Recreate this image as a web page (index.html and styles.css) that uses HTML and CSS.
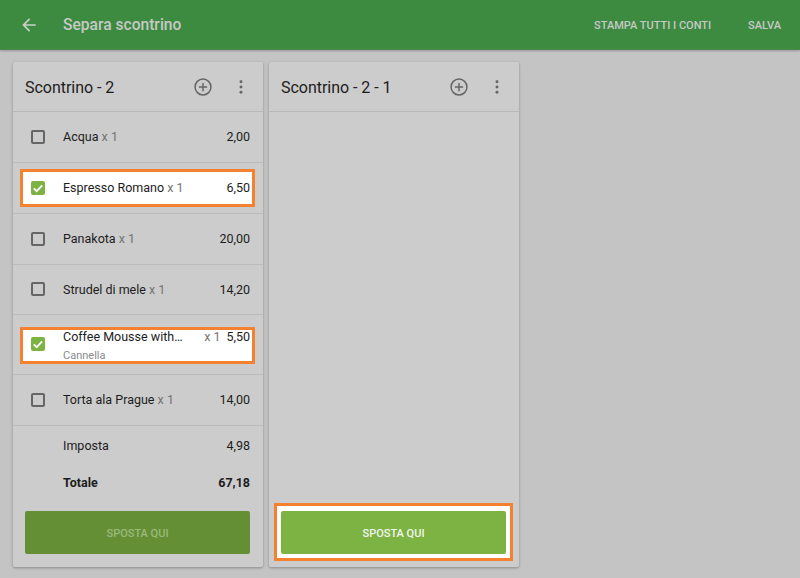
FILE: index.html
```html
<!DOCTYPE html>
<html lang="it">
<head>
<meta charset="utf-8">
<title>Separa scontrino</title>
<link rel="stylesheet" href="styles.css">
</head>
<body>
<header class="toolbar">
  <svg class="back" viewBox="0 0 24 24" width="20" height="20"><path d="M20 11H7.83l5.59-5.59L12 4l-8 8 8 8 1.41-1.41L7.83 13H20v-2z"/></svg>
  <h1 class="page-title">Separa scontrino</h1>
  <span class="action action-print">STAMPA TUTTI I CONTI</span>
  <span class="action">SALVA</span>
</header>
<main class="board">
  <section class="card">
    <div class="card-head">
      <h2 class="card-title">Scontrino - 2</h2>
      <svg class="icon-add" viewBox="0 0 24 24" width="18" height="18"><circle cx="12" cy="12" r="10.6"/><path d="M12 6.5v11M6.5 12h11"/></svg>
      <svg class="icon-more" viewBox="0 0 4 16" width="4" height="14"><circle cx="2" cy="2" r="1.7"/><circle cx="2" cy="8" r="1.7"/><circle cx="2" cy="14" r="1.7"/></svg>
    </div>
    <div class="row"><div class="item"><span class="check"></span><span class="name">Acqua <span class="qty">x 1</span></span><span class="price">2,00</span></div></div>
    <div class="row"><div class="item selected"><span class="check checked"><svg viewBox="0 0 14 14" width="14" height="14"><path d="M2.8 7.3l2.9 2.9 5.5-5.8"/></svg></span><span class="name">Espresso Romano <span class="qty">x 1</span></span><span class="price">6,50</span></div></div>
    <div class="row"><div class="item"><span class="check"></span><span class="name">Panakota <span class="qty">x 1</span></span><span class="price">20,00</span></div></div>
    <div class="row"><div class="item"><span class="check"></span><span class="name">Strudel di mele <span class="qty">x 1</span></span><span class="price">14,20</span></div></div>
    <div class="row row-tall"><div class="item selected"><span class="check checked check-raised"><svg viewBox="0 0 14 14" width="14" height="14"><path d="M2.8 7.3l2.9 2.9 5.5-5.8"/></svg></span><span class="name-stack"><span class="name-line"><span>Coffee Mousse with…</span><span class="qty">x 1</span></span><span class="note">Cannella</span></span><span class="price price-top">5,50</span></div></div>
    <div class="row"><div class="item"><span class="check"></span><span class="name">Torta ala Prague <span class="qty">x 1</span></span><span class="price">14,00</span></div></div>
    <div class="totals">
      <div class="total-line"><span>Imposta</span><span>4,98</span></div>
      <div class="total-line total-strong"><span>Totale</span><span>67,18</span></div>
    </div>
    <div class="foot"><button class="move move-off" type="button">SPOSTA QUI</button></div>
  </section>
  <section class="card">
    <div class="card-head">
      <h2 class="card-title">Scontrino - 2 - 1</h2>
      <svg class="icon-add" viewBox="0 0 24 24" width="18" height="18"><circle cx="12" cy="12" r="10.6"/><path d="M12 6.5v11M6.5 12h11"/></svg>
      <svg class="icon-more" viewBox="0 0 4 16" width="4" height="14"><circle cx="2" cy="2" r="1.7"/><circle cx="2" cy="8" r="1.7"/><circle cx="2" cy="14" r="1.7"/></svg>
    </div>
    <div class="spacer"></div>
    <div class="foot foot-marked"><div class="mark"><button class="move" type="button">SPOSTA QUI</button></div></div>
  </section>
</main>
</body>
</html>
```

FILE: styles.css
```css
* { box-sizing: border-box; }
html, body { height: 100%; }
body {
  margin: 0;
  height: 578px;
  overflow: hidden;
  background: #c4c4c4;
  font-family: Roboto, "Liberation Sans", sans-serif;
  color: #1c1c1c;
  display: flex;
  flex-direction: column;
}
.toolbar {
  flex: none;
  height: 50px;
  display: flex;
  align-items: center;
  background: #3d8b40;
  border-bottom: 1px solid #4c8a4e;
  box-shadow: 0 1px 2px rgba(70, 50, 70, .35);
  padding: 0 19px 0 19px;
  color: #c6c9c6;
}
.back { fill: #c6d3c6; flex: none; }
.page-title {
  margin: 0 0 0 24px;
  font-size: 15.6px;
  font-weight: 500;
  flex: 1;
}
.action { padding-top: 1px; font-size: 11px; font-weight: 500; }
.action-print { margin-right: 37px; }
.board {
  flex: 1;
  display: flex;
  gap: 6px;
  padding: 12px 13px 11px;
  min-height: 0;
}
.card {
  width: 250px;
  display: flex;
  flex-direction: column;
  background: #cccccc;
  border-radius: 2px;
  box-shadow: 0 1px 3px rgba(0, 0, 0, .3);
}
.card-head {
  flex: none;
  height: 50px;
  display: flex;
  align-items: center;
  padding: 0 20px 0 12px;
  border-bottom: 1px solid #b9b9b9;
}
.card-title { margin: 0; padding-top: 2px; flex: 1; font-size: 16px; font-weight: 400; letter-spacing: -.03px; }
.icon-add { fill: none; stroke: #666; stroke-width: 2; margin-right: 27px; }
.icon-more { fill: #666; }
.row {
  flex: none;
  height: 50.85px;
  padding: 6px 8px 6px 7px;
  border-bottom: 1px solid #bcbcbc;
}
.row-tall { height: 59.6px; padding: 12px 8px 10px 7px; }
.item {
  height: 100%;
  display: flex;
  align-items: center;
  padding: 0 2px 0 8px;
  border: 3px solid transparent;
  font-size: 12.5px;
  line-height: 15px;
}
.selected { background: #fff; border-color: #f48130; }
.check {
  flex: none;
  width: 14px;
  height: 14px;
  margin-right: 18px;
  border: 2px solid #666;
  border-radius: 2px;
}
.checked { background: #7cb342; border: 0; }
.check-raised { margin-bottom: 3px; }
.checked svg { display: block; fill: none; stroke: #fff; stroke-width: 1.8; }
.name { flex: 1; white-space: nowrap; }
.qty { color: #757575; }
.price { flex: none; }
.name-stack { flex: 1; min-width: 0; align-self: flex-start; display: flex; flex-direction: column; gap: 7px; line-height: 13px; }
.name-line { display: flex; justify-content: space-between; padding-right: 6px; white-space: nowrap; }
.note { font-size: 11px; line-height: 12px; color: #8a8a8a; }
.price-top { align-self: flex-start; line-height: 13px; }
.totals { flex: 1; padding: 1.5px 13px 0 50px; font-size: 12.5px; }
.total-line { height: 37px; display: flex; justify-content: space-between; align-items: center; }
.total-strong { font-weight: 700; }
.foot { flex: none; padding: 0 13px 13px 12px; }
.foot-marked { padding: 0 6px 6px 5px; }
.spacer { flex: 1; }
.mark { background: #fff; border: 3px solid #f48130; padding: 5px 4px 4px; }
.move {
  display: block;
  width: 100%;
  height: 43px;
  padding-top: 2px;
  border: 0;
  border-radius: 2px;
  background: #7cb342;
  color: #f2f5ee;
  font: 500 11px Roboto, "Liberation Sans", sans-serif;
}
.move-off { background: #648f35; color: #9cb97d; }
```
